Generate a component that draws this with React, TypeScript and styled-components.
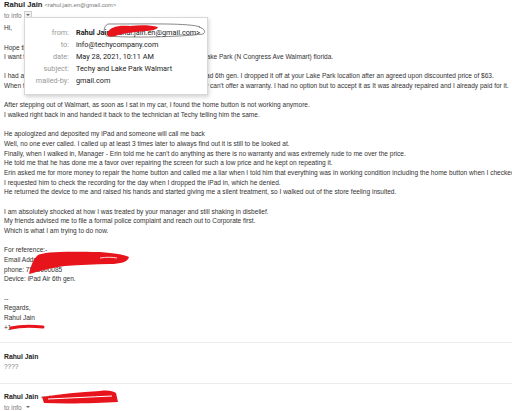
import styled, { createGlobalStyle } from "styled-components";

const GlobalStyle = createGlobalStyle`
  html, body {
    margin: 0;
    padding: 0;
    background: #fff;
  }
  body {
    width: 512px;
    height: 411px;
    overflow: hidden;
    font-family: "Liberation Sans", Arial, sans-serif;
    color: #222;
  }
`

const Page = styled.div`
  position: relative;
  width: 512px;
  height: 411px;
  overflow: hidden;
`

const Message = styled.section<{ $top?: number; $bottom?: number }>`
  position: relative;
  padding: ${p => p.$top ?? 0}px 0 ${p => p.$bottom ?? 0}px 4px;
`

const SenderRow = styled.div`
  display: flex;
  align-items: baseline;
  gap: 2px;
  height: 10px;
  line-height: 10px;
  white-space: nowrap;
`

const SenderName = styled.span<{ $size?: number }>`
  font-weight: bold;
  font-size: ${p => p.$size ?? 6.8}px;
  color: #222;
`

const SenderEmail = styled.span`
  font-size: 5.9px;
  color: #777;
`

const Recipients = styled.div`
  display: flex;
  align-items: center;
  gap: 2px;
  height: 10px;
  font-size: 6.5px;
  color: #777;
`

const DropButton = styled.span<{ $boxed?: boolean }>`
  display: inline-flex;
  align-items: center;
  justify-content: center;
  width: 6px;
  height: 6px;
  border: 1px solid ${p => (p.$boxed ? "#cfcfcf" : "transparent")};
  background: ${p => (p.$boxed ? "#f1f1f1" : "transparent")};

  &::after {
    content: "";
    border-left: 2px solid transparent;
    border-right: 2px solid transparent;
    border-top: 2.5px solid #666;
  }
`

const Preview = styled.div`
  height: 10px;
  line-height: 10px;
  font-size: 6.5px;
  color: #777;
`

const Body = styled.div`
  margin-top: 3.2px;
  font-size: 6.56px;
  line-height: 9.67px;
  color: #333;
`

const Line = styled.div`
  height: 9.67px;
  white-space: nowrap;
`

const Popover = styled.div`
  position: absolute;
  top: 17px;
  left: 24px;
  width: 184px;
  height: 78px;
  box-sizing: border-box;
  padding-top: 8px;
  background: #fff;
  border: 1px solid #d8d8d8;
  box-shadow: 1px 2px 4px rgba(0, 0, 0, 0.18);
  display: grid;
  grid-template-columns: 44px 1fr;
  grid-auto-rows: 12.1px;
  column-gap: 7px;
  align-items: center;
  font-family: Roboto, "Liberation Sans", Arial, sans-serif;
  font-size: 7.3px;
`

const Label = styled.span`
  text-align: right;
  color: #999;
`

const Value = styled.span`
  color: #222;
  white-space: nowrap;

  b {
    font-weight: bold;
  }
`

const Divider = styled.hr`
  margin: 0;
  border: 0;
  border-top: 1px solid #ececec;
`

const Overlay = styled.svg`
  position: absolute;
  top: 0;
  left: 0;
  pointer-events: none;
`

const bodyLines = [
  "Hi,",
  "",
  "Hope this finds you well.",
  "I want to bring to your notice my recent experience with the Techy at Lake Park (N Congress Ave Walmart) florida.",
  "",
  "I had a cracked screen that needed to be replaced on my old Apple iPad 6th gen. I dropped it off at your Lake Park location after an agreed upon discounted price of $63.",
  "When the device was done, I was told by the store technician that they can't offer a warranty. I had no option but to accept it as It was already repaired and I already paid for it.",
  "",
  "After stepping out of Walmart, as soon as I sat in my car, I found the home button is not working anymore.",
  "I walked right back in and handed it back to the technician at Techy telling him the same.",
  "",
  "He apologized and deposited my iPad and someone will call me back",
  "Well, no one ever called. I called up at least 3 times later to always find out it is still to be looked at.",
  "Finally, when I walked in, Manager - Erin told me he can't do anything as there is no warranty and was extremely rude to me over the price.",
  "He told me that he has done me a favor over repairing the screen for such a low price and he kept on repeating it.",
  "Erin asked me for more money to repair the home button and called me a liar when I told him that everything was in working condition including the home button when I checked it.",
  "I requested him to check the recording for the day when I dropped the iPad in, which he denied.",
  "He returned the device to me and raised his hands and started giving me a silent treatment, so I walked out of the store feeling insulted.",
  "",
  "I am absolutely shocked at how I was treated by your manager and still shaking in disbelief.",
  "My friends advised me to file a formal police complaint and reach out to Corporate first.",
  "Which is what I am trying to do now.",
  "",
  "For reference:-",
  "Email Address: rahul.jain@gmail.com",
  "phone: 7540000085",
  "Device: iPad Air 6th gen.",
  "",
  "--",
  "Regards,",
  "Rahul Jain",
  "+1",
]

const headers: [string, string][] = [
  ["from:", ""],
  ["to:", "info@techycompany.com"],
  ["date:", "May 28, 2021, 10:11 AM"],
  ["subject:", "Techy and Lake Park Walmart"],
  ["mailed-by:", "gmail.com"],
]

const App = () => {
  return (
    <Page>
      <GlobalStyle />
      <Message $bottom={9.5}>
        <SenderRow>
          <SenderName $size={7.6}>Rahul Jain</SenderName>
          <SenderEmail>&lt;rahul.jain.en@gmail.com&gt;</SenderEmail>
        </SenderRow>
        <Recipients>
          to info <DropButton $boxed />
        </Recipients>
        <Body>
          {bodyLines.map((text, i) => (
            <Line key={i}>{text || "\u00a0"}</Line>
          ))}
        </Body>
        <Popover>
          {headers.map(([label, value]) => [
            <Label key={label + "-l"}>{label}</Label>,
            <Value key={label + "-v"}>
              {value || (
                <>
                  <b>Rahul Jain</b> &lt;rahul.jain.en@gmail.com&gt;
                </>
              )}
            </Value>,
          ])}
        </Popover>
      </Message>
      <Divider />
      <Message $top={9.3} $bottom={11}>
        <SenderRow>
          <SenderName>Rahul Jain</SenderName>
        </SenderRow>
        <Preview>????</Preview>
      </Message>
      <Divider />
      <Message $top={8.4}>
        <SenderRow>
          <SenderName>Rahul Jain</SenderName>
          <SenderEmail>&lt;rahul.jain.en@gmail.com&gt;</SenderEmail>
        </SenderRow>
        <Recipients>
          to info <DropButton />
        </Recipients>
      </Message>

      <Overlay width="512" height="411" viewBox="0 0 512 411">
        <path
          d="M200,27 C190,23 150,24 108,24 C103,26 103,35 107,36 C130,38 180,37 203,34 C206,32 205,29 199,27"
          fill="none"
          stroke="#555"
          strokeWidth="0.7"
        />
        <path
          d="M107,34 C109,27 118,25 130,26 C140,25 150,25 158,27 C157,30 150,31 145,31 C135,32 125,33 118,35 C113,37 108,38 107,34 Z"
          fill="#e8141c"
        />
        <path
          d="M29,274 C31,266 33,259 38,255 C44,252 60,251 100,252 C112,253 122,254 129,257 C128,262 120,264 110,264 C95,264 80,265 65,266 C50,268 40,271 29,274 Z"
          fill="#e8141c"
        />
        <path d="M100,258 C106,257 112,257 117,258" stroke="#fff" strokeWidth="0.8" fill="none" />
        <path d="M11,328 C20,326 32,326 43,327" stroke="#e8141c" strokeWidth="3" fill="none" strokeLinecap="round" />
        <path
          d="M42,397 C60,394 80,392 100,391 C108,390 113,391 116,393 L118,402 C100,403 70,404 44,403 Z"
          fill="#e8141c"
        />
        <path d="M48,399 C70,398 90,397 112,396" stroke="#fff" strokeWidth="1" fill="none" />
      </Overlay>
    </Page>
  );
}

export default App;
